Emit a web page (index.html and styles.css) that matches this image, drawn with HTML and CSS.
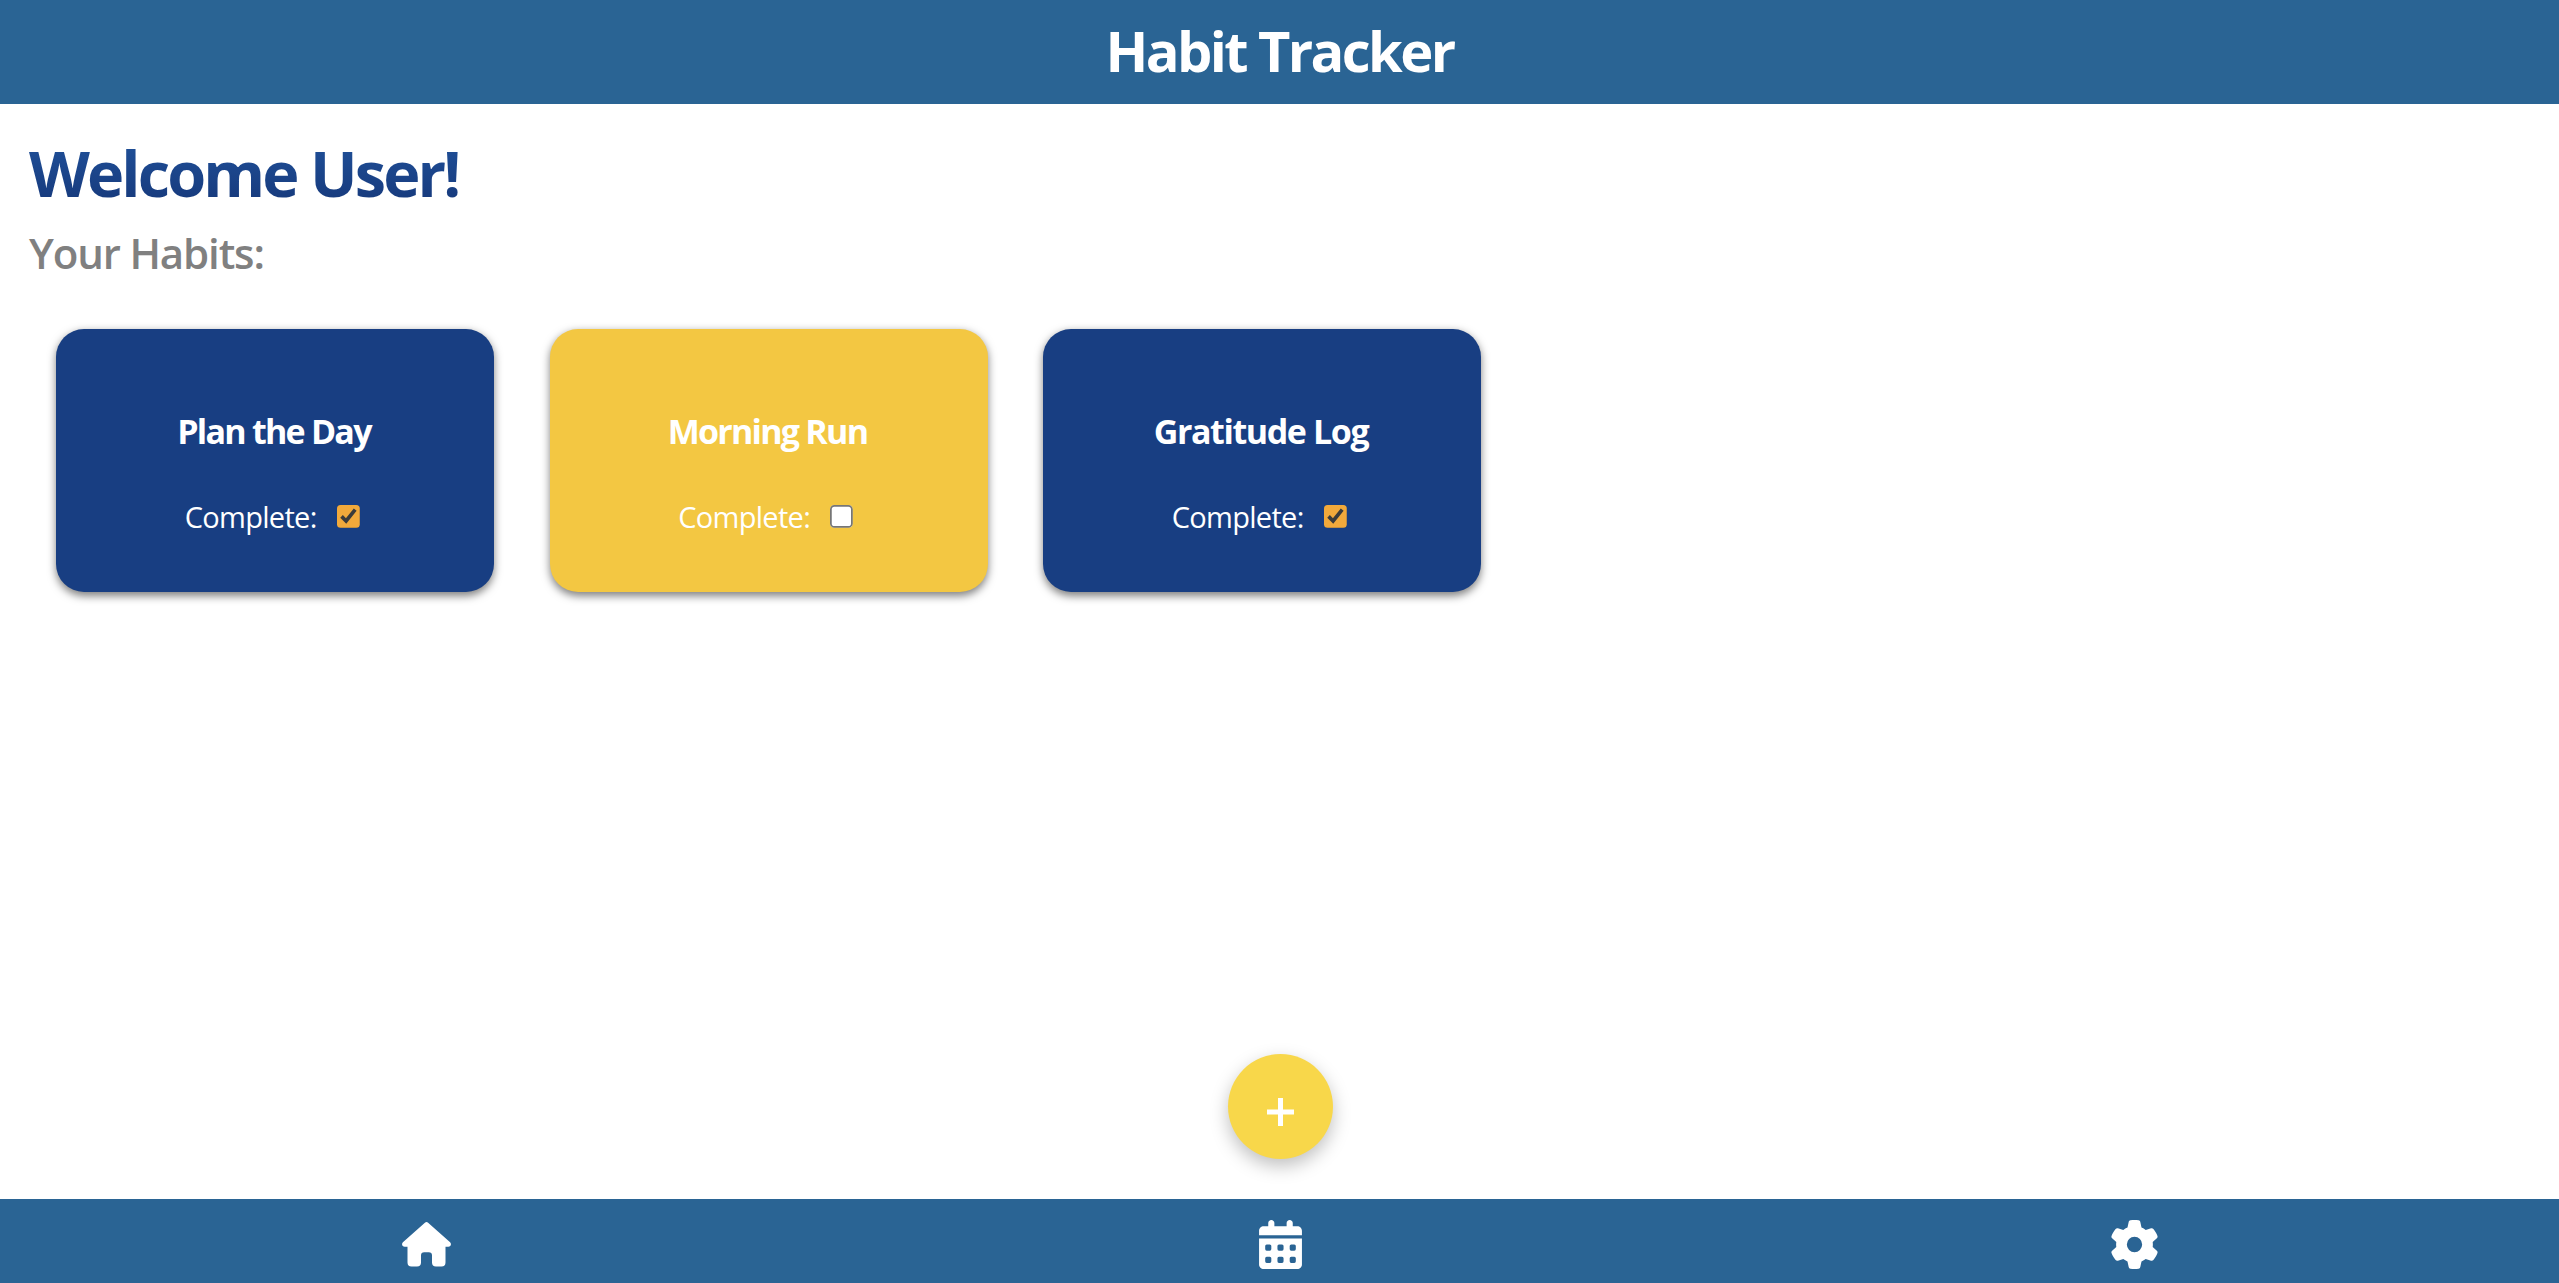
FILE: index.html
```html
<!DOCTYPE html>
<html lang="en">
<head>
<meta charset="utf-8">
<title>Habit Tracker</title>
<link rel="stylesheet" href="styles.css">
</head>
<body>
<header class="header"><h1 class="title">Habit Tracker</h1></header>
<main class="main">
  <h2 class="welcome">Welcome User!</h2>
  <h3 class="subtitle">Your Habits:</h3>
  <section class="habits">
    <article class="card done">
      <h4 class="card-name">Plan the Day</h4>
      <label class="check"><span class="check-text">Complete:</span><input class="box" type="checkbox" checked></label>
    </article>
    <article class="card">
      <h4 class="card-name">Morning Run</h4>
      <label class="check"><span class="check-text">Complete:</span><input class="box" type="checkbox"></label>
    </article>
    <article class="card done">
      <h4 class="card-name log">Gratitude Log</h4>
      <label class="check"><span class="check-text">Complete:</span><input class="box" type="checkbox" checked></label>
    </article>
  </section>
  <button class="add" aria-label="Add habit"><svg width="27" height="28" viewBox="0 0 27 28"><path d="M11 0h5v11.5h11v5H16V28h-5V16.500H0v-5h11z"/></svg></button>
</main>
<nav class="nav">
  <a class="nav-item"><svg width="49" height="45" viewBox="0 0 49 45"><path d="M22.900 .7Q24.500-.5 26.100 .7L48.100 20.300C49.900 22.200 48.600 24.800 46.300 24.800H43.500V40.500Q43.500 44.500 39.500 44.500H34Q30 44.500 30 40.500V33.500Q30 30.200 26.800 30.200H22.200Q19 30.200 19 33.500V40.500Q19 44.500 15 44.500H9.500Q5.500 44.500 5.500 40.500V24.800H2.700C.4 24.800-.9 22.200 .9 20.300Z"/></svg></a>
  <a class="nav-item"><svg width="43" height="49" viewBox="0 0 448 512"><path fill-rule="evenodd" d="M128 0c17.700 0 32 14.300 32 32V64H288V32c0-17.700 14.300-32 32-32s32 14.300 32 32V64h48c26.500 0 48 21.500 48 48v48H0V112C0 85.500 21.500 64 48 64H96V32c0-17.700 14.300-32 32-32zM0 192H448V464c0 26.500-21.500 48-48 48H48c-26.500 0-48-21.500-48-48zM80 256a16 16 0 0 0-16 16v32a16 16 0 0 0 16 16h32a16 16 0 0 0 16-16v-32a16 16 0 0 0-16-16zm128 0a16 16 0 0 0-16 16v32a16 16 0 0 0 16 16h32a16 16 0 0 0 16-16v-32a16 16 0 0 0-16-16zm128 0a16 16 0 0 0-16 16v32a16 16 0 0 0 16 16h32a16 16 0 0 0 16-16v-32a16 16 0 0 0-16-16zM80 384a16 16 0 0 0-16 16v32a16 16 0 0 0 16 16h32a16 16 0 0 0 16-16v-32a16 16 0 0 0-16-16zm128 0a16 16 0 0 0-16 16v32a16 16 0 0 0 16 16h32a16 16 0 0 0 16-16v-32a16 16 0 0 0-16-16zm128 0a16 16 0 0 0-16 16v32a16 16 0 0 0 16 16h32a16 16 0 0 0 16-16v-32a16 16 0 0 0-16-16z"/></svg></a>
  <a class="nav-item"><svg width="49" height="49" viewBox="0 0 512 512"><path fill-rule="evenodd" d="M495.9 166.6c3.2 8.7 .5 18.4-6.4 24.6l-43.3 39.4c1.1 8.3 1.7 16.8 1.7 25.4s-.6 17.1-1.7 25.4l43.3 39.4c6.9 6.2 9.6 15.9 6.4 24.6c-4.4 11.9-9.7 23.3-15.8 34.3l-4.7 8.1c-6.6 11-14 21.4-22.1 31.2c-5.9 7.2-15.7 9.6-24.5 6.8l-55.7-17.7c-13.4 10.3-28.2 18.9-44 25.4l-12.5 57.1c-2 9.1-9 16.3-18.2 17.8c-13.8 2.3-28 3.5-42.5 3.5s-28.7-1.2-42.5-3.5c-9.2-1.5-16.2-8.7-18.2-17.8l-12.5-57.1c-15.8-6.5-30.6-15.1-44-25.4L83.1 425.9c-8.8 2.8-18.6 .3-24.5-6.8c-8.1-9.8-15.5-20.2-22.1-31.2l-4.7-8.1c-6.1-11-11.4-22.4-15.8-34.3c-3.2-8.7-.5-18.4 6.4-24.6l43.3-39.4C64.6 273.1 64 264.6 64 256s.6-17.1 1.7-25.4L22.4 191.2c-6.9-6.2-9.6-15.9-6.4-24.6c4.4-11.9 9.7-23.3 15.8-34.3l4.7-8.1c6.6-11 14-21.4 22.1-31.2c5.9-7.2 15.7-9.6 24.5-6.8l55.7 17.7c13.4-10.3 28.2-18.9 44-25.4l12.5-57.1c2-9.1 9-16.3 18.2-17.8C227.3 1.2 241.5 0 256 0s28.7 1.2 42.5 3.5c9.2 1.5 16.2 8.7 18.2 17.8l12.5 57.1c15.8 6.5 30.6 15.1 44 25.4l55.7-17.7c8.8-2.8 18.6-.3 24.5 6.8c8.1 9.8 15.5 20.2 22.1 31.2l4.7 8.1c6.1 11 11.4 22.4 15.8 34.3zM256 336a80 80 0 1 0 0-160 80 80 0 1 0 0 160z"/></svg></a>
</nav>
</body>
</html>
```
FILE: styles.css
```css
* { box-sizing: border-box; margin: 0; }
body {
  height: 100vh;
  display: flex;
  flex-direction: column;
  overflow: hidden;
  background: #fff;
  font-family: "Open Sans", "Noto Sans", sans-serif;
}
h1, h2, h3, h4, .check-text { white-space: nowrap; }
.header {
  height: 104px;
  background: #2a6494;
  color: #fff;
  display: flex;
  justify-content: center;
}
.title { font-size: 56px; line-height: 100px; font-weight: 700; letter-spacing: -2.6px; }
.main {
  flex: 1;
  display: flex;
  flex-direction: column;
  align-items: flex-start;
  padding: 25px 29px 40px;
}
.welcome {
  font-size: 63px;
  line-height: 88px;
  font-weight: 700;
  letter-spacing: -2.9px;
  background: linear-gradient(#2a6494 -30%, #1f4e96 20%, #173b7e 80%);
  -webkit-background-clip: text;
  background-clip: text;
  color: transparent;
}
.subtitle { margin-top: 2px; font-size: 42px; line-height: 68px; font-weight: 600; letter-spacing: -1.15px; color: #808080; }
.habits { display: flex; gap: 55.500px; padding: 42px 27px 0; }
.card {
  width: 438px;
  height: 263px;
  border-radius: 28px;
  background: #f3c742;
  color: #fff;
  box-shadow: 0 3.500px 9px rgba(0, 0, 0, .5);
  display: flex;
  flex-direction: column;
  align-items: center;
  padding-top: 78px;
}
.done { background: #183e82; }
.card-name { margin-right: 2px; font-size: 34px; line-height: 48px; font-weight: 700; letter-spacing: -1.75px; }
.log { letter-spacing: -1.4px; }
.check { display: flex; align-items: center; gap: 20px; margin: 39px 5px 0 0; }
.check-text { font-size: 29px; line-height: 46px; letter-spacing: -.7px; }
.box { zoom: 1.75; width: 13.5px; height: 13.5px; accent-color: #f2a93b; }
.add {
  width: 105px;
  height: 105px;
  margin: auto auto 0;
  border: 0;
  padding: 10px 0 0;
  border-radius: 50%;
  background: #f8d74a;
  box-shadow: 0 7px 18px rgba(0, 0, 0, .25);
  display: flex;
  align-items: center;
  justify-content: center;
  transform: translateX(1px);
}
.nav {
  height: 84px;
  width: calc(100% + 2px);
  background: #2a6494;
  display: grid;
  grid-template-columns: repeat(3, 1fr);
}
.nav-item { display: flex; align-items: center; justify-content: center; padding-top: 7px; }
svg { fill: #fff; }
```
